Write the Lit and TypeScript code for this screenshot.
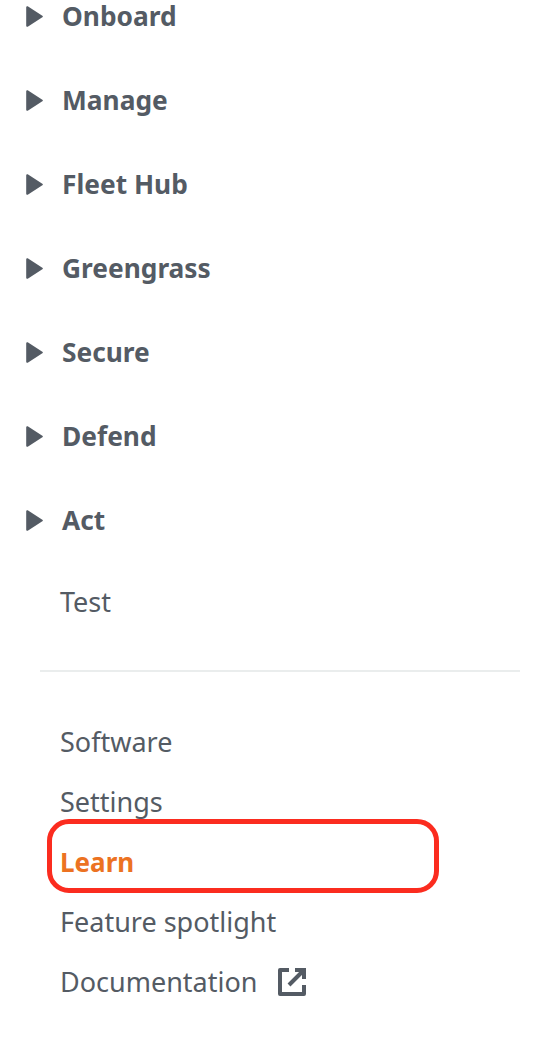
import { LitElement, html, css, svg } from "lit";
import { customElement } from "lit/decorators.js";

const groups = ["Onboard", "Manage", "Fleet Hub", "Greengrass", "Secure", "Defend", "Act"];

@customElement("app-root")
export class AppRoot extends LitElement {
  static styles = css`
    :host {
      display: block;
      position: relative;
      width: 560px;
      height: 1048px;
      overflow: hidden;
      background: #fff;
      color: #545b64;
      font-family: "Noto Sans", "Open Sans", sans-serif;
      font-size: 27px;
      line-height: 32px;
    }
    .groups {
      display: flex;
      flex-direction: column;
      gap: 52px;
      padding-left: 26px;
    }
    .group {
      display: flex;
      align-items: center;
      gap: 19px;
      font-weight: 700;
      font-size: 26.3px;
      height: 32px;
    }
    .caret { width: 17px; height: 21px; display: block; flex: none; }
    .test { margin: 50px 0 0 60px; height: 32px; }
    .divider { height: 2px; background: #eaeded; margin: 52px 40px 0; }
    .links {
      display: flex;
      flex-direction: column;
      gap: 28px;
      padding: 54px 0 0 60px;
    }
    .link { display: flex; align-items: center; height: 32px; }
    .active { color: #ec7222; font-weight: 700; font-size: 26px; }
    .ext { width: 30px; height: 30px; margin-left: 20px; display: block; }
    .annotation {
      position: absolute;
      left: 47px;
      top: 819px;
      width: 392px;
      height: 74px;
      box-sizing: border-box;
      border: 5px solid #fb2c1f;
      border-radius: 22px;
    }
  `;

  render() {
    return html`
      <div class="groups">
        ${groups.map(
          (g) => html`<div class="group">
            <svg class="caret" viewBox="0 0 17 21">
              <path d="M1.2 1.2 L15.8 10.5 L1.2 19.8 Z" fill="#545b64" stroke="#545b64" stroke-width="2" stroke-linejoin="round" />
            </svg>
            <span>${g}</span>
          </div>`
        )}
      </div>
      <div class="test">Test</div>
      <div class="divider"></div>
      <div class="links">
        <div class="link">Software</div>
        <div class="link">Settings</div>
        <div class="link active">Learn</div>
        <div class="link">Feature spotlight</div>
        <div class="link">
          Documentation
          <svg class="ext" viewBox="0 0 30 30" fill="none" stroke="#545b64" stroke-width="4">
            ${svg`<path d="M12 3 H3 V27 H27 V18" stroke-linejoin="round" />
            <path d="M18 3 H27 V12" />
            <path d="M27 3 L12 18" />`}
          </svg>
        </div>
      </div>
      <div class="annotation"></div>
    `;
  }
}
